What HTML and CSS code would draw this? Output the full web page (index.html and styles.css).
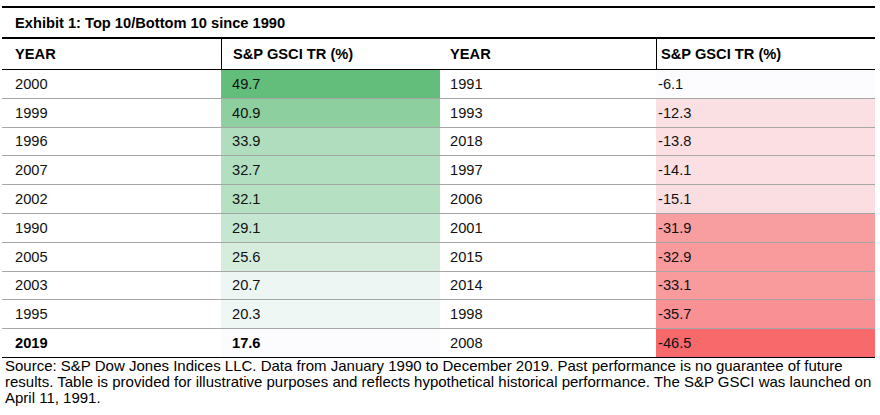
FILE: index.html
```html
<!DOCTYPE html>
<html>
<head>
<meta charset="utf-8">
<link rel="stylesheet" href="styles.css">
</head>
<body>
<div class="exhibit">
  <div class="title">Exhibit 1: Top 10/Bottom 10 since 1990</div>
  <div class="head">
    <div class="c c1">YEAR</div>
    <div class="c c2 div">S&amp;P GSCI TR (%)</div>
    <div class="c c3">YEAR</div>
    <div class="c c4 div">S&amp;P GSCI TR (%)</div>
  </div>
  <div class="body">
    <div class="row"><div class="c c1">2000</div><div class="c c2" style="background:#63be7b">49.7</div><div class="c c3">1991</div><div class="c c4" style="background:#fcfcff">-6.1</div></div>
    <div class="row"><div class="c c1">1999</div><div class="c c2" style="background:#8dcf9f">40.9</div><div class="c c3">1993</div><div class="c c4" style="background:#fbe0e3">-12.3</div></div>
    <div class="row"><div class="c c1">1996</div><div class="c c2" style="background:#b0ddbe">33.9</div><div class="c c3">2018</div><div class="c c4" style="background:#fbdfe2">-13.8</div></div>
    <div class="row"><div class="c c1">2007</div><div class="c c2" style="background:#b3dfc1">32.7</div><div class="c c3">1997</div><div class="c c4" style="background:#fbdfe2">-14.1</div></div>
    <div class="row"><div class="c c1">2002</div><div class="c c2" style="background:#b5e0c2">32.1</div><div class="c c3">2006</div><div class="c c4" style="background:#fbdee1">-15.1</div></div>
    <div class="row"><div class="c c1">1990</div><div class="c c2" style="background:#c5e6d0">29.1</div><div class="c c3">2001</div><div class="c c4" style="background:#f99ea0">-31.9</div></div>
    <div class="row"><div class="c c1">2005</div><div class="c c2" style="background:#d6edde">25.6</div><div class="c c3">2015</div><div class="c c4" style="background:#f99b9d">-32.9</div></div>
    <div class="row"><div class="c c1">2003</div><div class="c c2" style="background:#edf6f2">20.7</div><div class="c c3">2014</div><div class="c c4" style="background:#f99a9c">-33.1</div></div>
    <div class="row"><div class="c c1">1995</div><div class="c c2" style="background:#eff7f4">20.3</div><div class="c c3">1998</div><div class="c c4" style="background:#f99093">-35.7</div></div>
    <div class="row"><div class="c c1 bold">2019</div><div class="c c2 bold" style="background:#fcfcff">17.6</div><div class="c c3">2008</div><div class="c c4" style="background:#f8696b">-46.5</div></div>
  </div>
  <p class="source">Source: S&amp;P Dow Jones Indices LLC. Data from January 1990 to December 2019. Past performance is no guarantee of future results. Table is provided for illustrative purposes and reflects hypothetical historical performance. The S&amp;P GSCI was launched on April 11, 1991.</p>
</div>
</body>
</html>
```

FILE: styles.css
```css
* { box-sizing: border-box; }
html, body { margin: 0; padding: 0; background: #fff; }
body {
  font-family: "Liberation Sans", Arial, sans-serif;
  color: #111;
}
.exhibit {
  margin: 6px 0 0 2px;
  width: 873px;
}
.title {
  border-top: 2px solid #000;
  border-bottom: 2px solid #000;
  height: 33px;
  padding: 1px 0 0 13px;
  display: flex;
  align-items: center;
  font-weight: bold;
  font-size: 14.67px;
  color: #000;
}
.head {
  display: grid;
  grid-template-columns: 219px 219px 216px 219px;
  height: 31px;
  border-bottom: 1px solid #000;
  font-weight: bold;
  font-size: 14.67px;
  color: #000;
}
.row {
  display: grid;
  grid-template-columns: 219px 219px 216px 219px;
  height: 28.8px;
  border-bottom: 1px solid #a6a6a6;
  font-size: 14.67px;
}
.row:last-child { border-bottom-color: #000; }
.bold { font-weight: bold; color: #000; }
.c {
  display: flex;
  align-items: center;
  white-space: nowrap;
}
.c1 { padding-left: 13px; }
.c2 { padding-left: 11px; }
.c3 { padding-left: 10px; }
.c4 { padding-left: 2px; }
.head .c4 { padding-left: 4px; }
.div { border-left: 1px solid #000; }
.source {
  margin: 0 0 0 3px;
  width: 874px;
  font-size: 15px;
  line-height: 16px;
  color: #000;
}
```
